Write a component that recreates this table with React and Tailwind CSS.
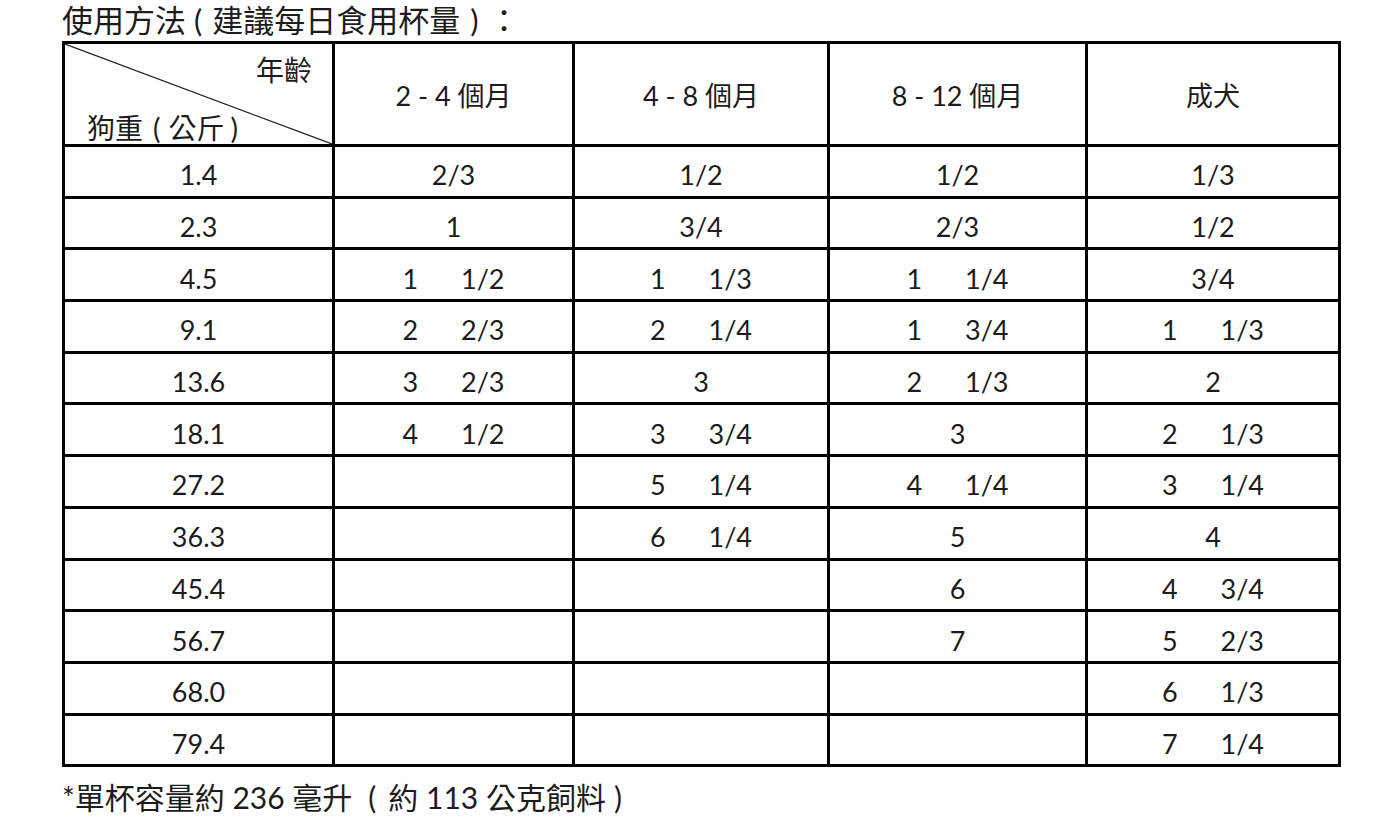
import React from 'react';

const font = { fontFamily: 'Lato, "Noto Sans CJK TC", sans-serif' };

const ages = ['2 - 4 個月', '4 - 8 個月', '8 - 12 個月', '成犬'];

// each value: string, [whole, frac] or null
const rows = [
  ['1.4', '2/3', '1/2', '1/2', '1/3'],
  ['2.3', '1', '3/4', '2/3', '1/2'],
  ['4.5', ['1', '1/2'], ['1', '1/3'], ['1', '1/4'], '3/4'],
  ['9.1', ['2', '2/3'], ['2', '1/4'], ['1', '3/4'], ['1', '1/3']],
  ['13.6', ['3', '2/3'], '3', ['2', '1/3'], '2'],
  ['18.1', ['4', '1/2'], ['3', '3/4'], '3', ['2', '1/3']],
  ['27.2', null, ['5', '1/4'], ['4', '1/4'], ['3', '1/4']],
  ['36.3', null, ['6', '1/4'], '5', '4'],
  ['45.4', null, null, '6', ['4', '3/4']],
  ['56.7', null, null, '7', ['5', '2/3']],
  ['68.0', null, null, null, ['6', '1/3']],
  ['79.4', null, null, null, ['7', '1/4']],
];

const widths = ['w-[270px]', 'w-[240px]', 'w-[255px]', 'w-[258px]', 'w-[253px]'];

const Value = ({ v }) => {
  if (!v) return null;
  if (Array.isArray(v)) {
    return (
      <span className="inline-flex w-[102px] justify-between">
        <span>{v[0]}</span>
        <span>{v[1]}</span>
      </span>
    );
  }
  return <span>{v}</span>;
};

export default function App() {
  return (
    <div className="min-h-[817px] bg-white text-[#1c1c1c] pl-[62px]" style={font}>
      <h1 className="text-[31px] leading-[41px] font-normal">
        使用方法<span className="pl-[8px] pr-[10px]">(</span>建議每日食用杯量
        <span className="pl-[10px] pr-[10px]">)</span>：
      </h1>
      <table className="border-collapse border-[3px] border-black text-[27px]">
        <thead>
          <tr className="h-[102px]">
            <th className={`relative border-[3px] border-black font-normal p-0 ${widths[0]}`}>
              <svg className="absolute inset-0 w-full h-full" preserveAspectRatio="none" viewBox="0 0 100 100">
                <line x1="0" y1="0" x2="100" y2="100" stroke="#222" strokeWidth="1.2" vectorEffect="non-scaling-stroke" />
              </svg>
              <div className="flex flex-col h-[100px] pl-[22px] pr-[20px] pt-[10px] pb-0 justify-between leading-[32px] text-[28px]">
                <span className="self-end">年齡</span>
                <span className="self-start">
                  狗重<span className="pl-[10px] pr-[8px]">(</span>公斤<span className="pl-[6px]">)</span>
                </span>
              </div>
            </th>
            {ages.map((a, i) => (
              <th key={a} className={`border-[3px] border-black font-normal pt-[4px] ${widths[i + 1]}`}>
                {a}
              </th>
            ))}
          </tr>
        </thead>
        <tbody>
          {rows.map((r) => (
            <tr key={r[0]} className="h-[51.7px]">
              {r.map((v, i) => (
                <td key={i} className="border-[3px] border-black text-center p-0 pt-[8px] leading-[40px]">
                  <Value v={v} />
                </td>
              ))}
            </tr>
          ))}
        </tbody>
      </table>
      <p className="text-[30px] mt-[8px]">
        *單杯容量約 236 毫升<span className="pl-[16px] pr-[12px]">(</span>約 113 公克飼料
        <span className="pl-[8px]">)</span>
      </p>
    </div>
  );
}
